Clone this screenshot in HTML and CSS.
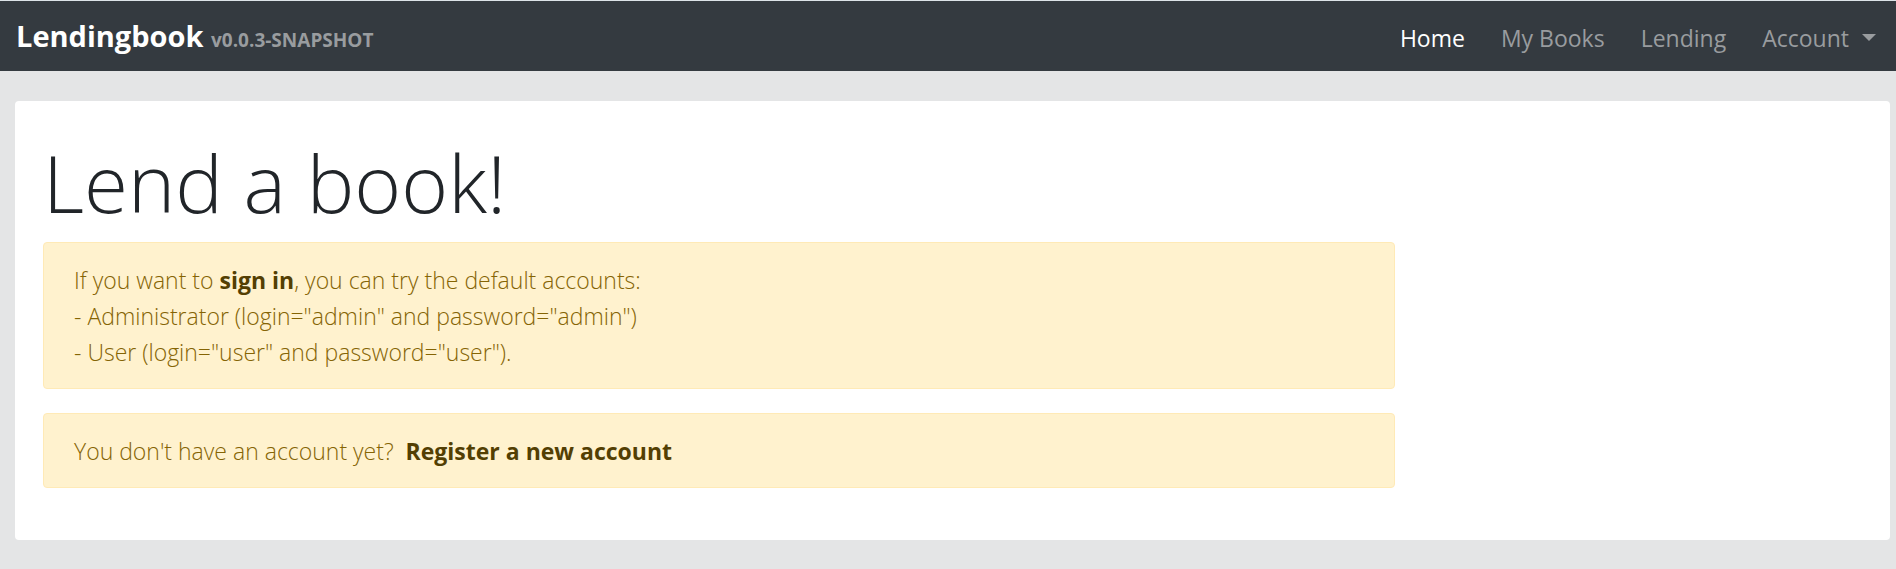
FILE: index.html
```html
<!DOCTYPE html>
<html lang="en">
<head>
<meta charset="utf-8">
<title>Lendingbook</title>
<link rel="stylesheet" href="styles.css">
</head>
<body>
<header class="navbar">
  <a class="brand" href="#"><span class="brand-title">Lendingbook</span> <span class="brand-version">v0.0.3-SNAPSHOT</span></a>
  <nav class="nav">
    <a class="nav-link active" href="#">Home</a>
    <a class="nav-link" href="#">My Books</a>
    <a class="nav-link" href="#">Lending</a>
    <button class="nav-link account" type="button">Account<svg class="caret" viewBox="0 0 14 7" aria-hidden="true"><path d="M0 0h14L7 7z" fill="currentColor"/></svg></button>
  </nav>
</header>
<main class="card">
  <h1 class="title">Lend a book!</h1>
  <div class="alert">If you want to <a class="alert-link" href="#">sign in</a>, you can try the default accounts:<br>- Administrator (login="admin" and password="admin")<br>- User (login="user" and password="user").</div>
  <div class="alert">You don't have an account yet?&nbsp; <a class="alert-link" href="#">Register a new account</a></div>
</main>
</body>
</html>
```
FILE: styles.css
```css
* { box-sizing: border-box; }
body {
  margin: 0;
  background: #e4e5e6;
  color: #212529;
  font-family: "Open Sans", "Noto Sans", sans-serif;
  font-size: 23px;
  line-height: 36px;
}
.navbar {
  display: flex;
  justify-content: space-between;
  align-items: center;
  min-height: 71px;
  padding: 3px 20px 0 16px;
  background: #343a40;
  border-top: 1px solid #dce3e8;
}
.brand { color: #fff; text-decoration: none; font-weight: 700; font-size: 29px; }
.brand-version { color: #999c9f; font-size: 19px; }
.nav { display: flex; gap: 36px; }
.nav-link {
  padding: 0;
  border: 0;
  background: none;
  color: #999c9f;
  font: inherit;
  text-decoration: none;
}
.nav-link.active { color: #fff; }
.account { display: flex; align-items: center; gap: 13px; }
.caret { width: 14px; height: 7px; }
.card {
  margin: 30px 6px 30px 15px;
  padding: 37px 28px 52px;
  background: #fff;
  border-radius: 4px;
}
.title { margin: 0 0 16px; font-size: 80px; line-height: 88px; font-weight: 300; }
.alert {
  width: calc(75% - 12px);
  margin-bottom: 24px;
  padding: 19px 30px 18px;
  border: 1px solid #ffeab6;
  border-radius: 4px;
  background: #fff2ce;
  color: #856404;
  font-weight: 300;
}
.alert:last-child { margin-bottom: 0; }
.alert-link { color: #533f03; font-weight: 700; text-decoration: none; }
```
